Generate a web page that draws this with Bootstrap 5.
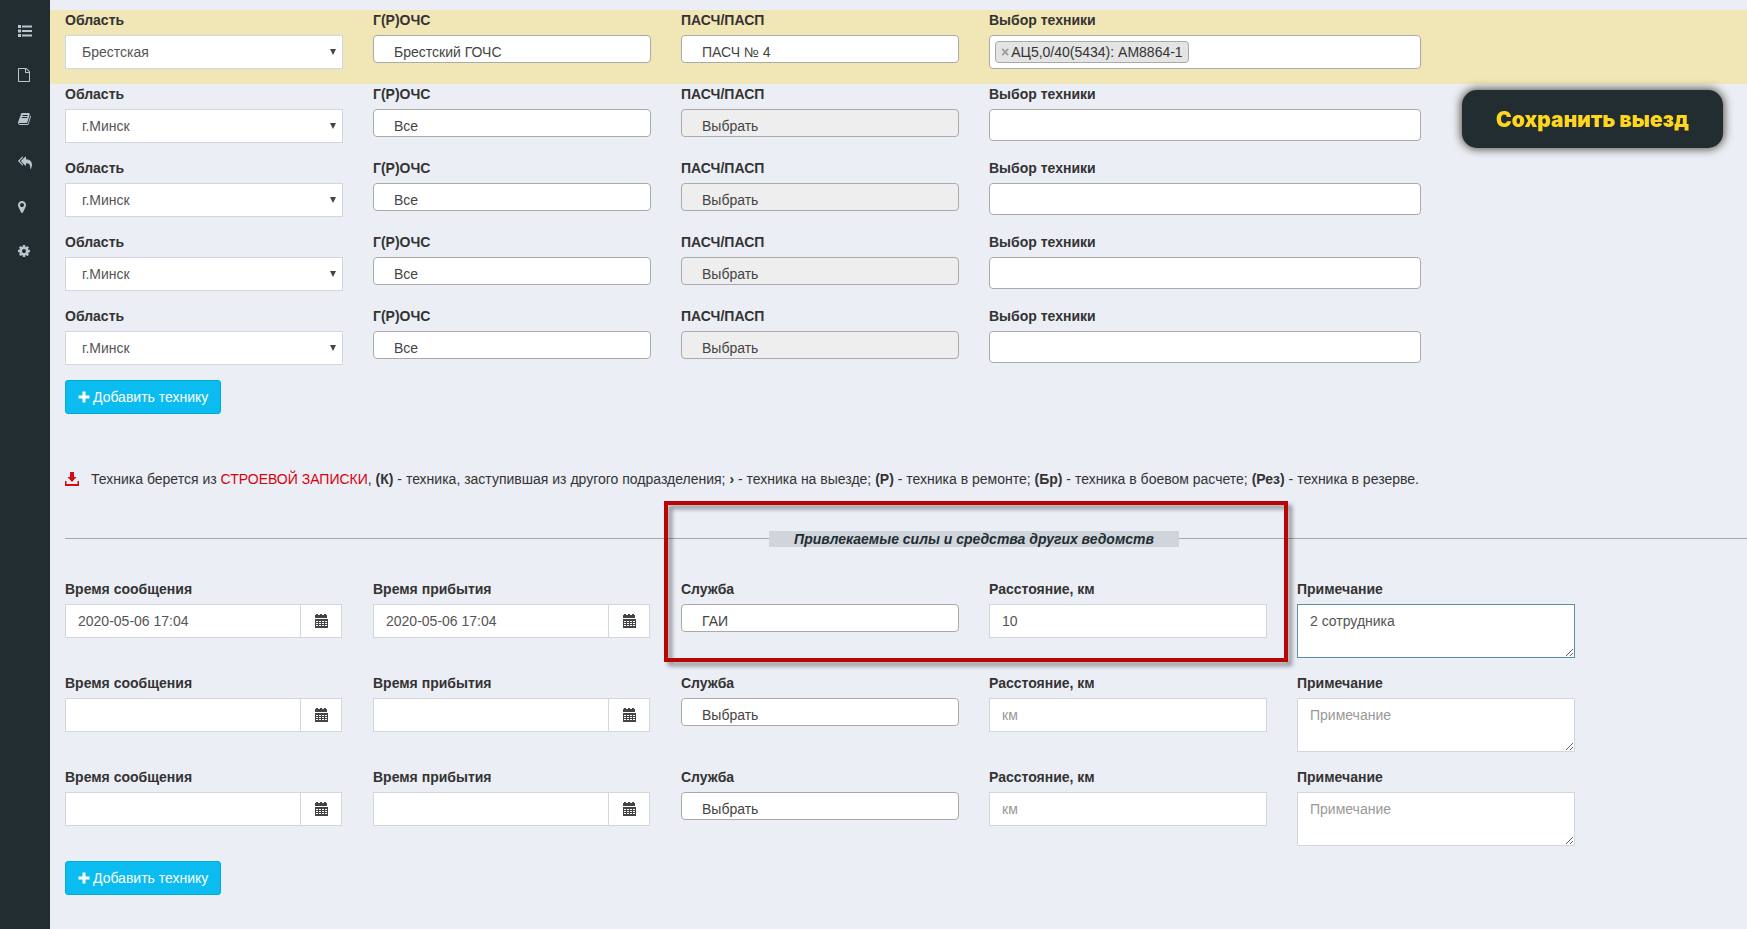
<!DOCTYPE html>
<html lang="ru">
<head>
<meta charset="utf-8">
<meta name="viewport" content="width=device-width, initial-scale=1">
<title>Выезд</title>
<link href="https://cdn.jsdelivr.net/npm/bootstrap@5.3.0/dist/css/bootstrap.min.css" rel="stylesheet">
<style>
  body { font-family: "Liberation Sans", Arial, sans-serif; font-size: 14px; line-height: 20px; color: #333; background: #ebeef5; }
  .side { flex: 0 0 50px; background: #222d32; padding-top: 9px; }
  .side a { height: 44px; padding-left: 18px; color: #b8c7ce; }
  .side svg { width: 14px; height: 14px; fill: currentColor; }
  .page-body { padding-top: 10px; overflow: hidden; min-height: 100vh; }
  .line { display: flex; padding-bottom: 15px; }
  .line.chosen { background: #f1e6b5; }
  .cell { flex: 0 0 18.15%; padding: 0 15px; }
  .cell.wide { flex-basis: 27.23%; }
  .cell > label { display: block; font-weight: 700; margin-bottom: 5px; }
  .form-control, .form-select { font-size: 14px; line-height: 20px; color: #555; border: 1px solid #d2d6de; border-radius: 0; padding: 6px 12px; background-color: #fff; }
  .form-control { min-height: 34px; }
  .form-control::placeholder { color: #999; }
  .form-select { height: 34px; padding-left: 16px; background-size: 8px 8px; background-position: right 5px center;
    background-image: url("data:image/svg+xml,%3Csvg xmlns='http://www.w3.org/2000/svg' viewBox='0 0 8 8'%3E%3Cpath d='M1 1h6L4 7z' fill='%23444'/%3E%3C/svg%3E"); }
  .form-select.combo { height: 28px; padding: 6px 12px 0 20px; border-color: #aaa; border-radius: 4px; color: #444; background-image: none; }
  .form-select.combo:disabled { background-color: #eee; opacity: 1; }
  .picker { width: 100%; height: 32px; border: 1px solid #aaa; border-radius: 4px; background: #fff; padding: 0 5px; }
  .picker.filled { display: flex; align-items: center; height: 34px; }
  .picker input { border: 0; outline: 0; flex: 1; min-width: 0; }
  .chip { display: flex; align-items: center; height: 22px; padding: 0 5px; border: 1px solid #aaa; border-radius: 4px; background: #e4e4e4; white-space: nowrap; }
  .chip button { border: 0; background: none; padding: 0 2px 0 0; color: #999; font-weight: 700; font-size: 14px; line-height: 20px; }
  .input-group { padding-right: 1px; }
  .input-group .btn { width: 42px; padding: 0; border: 1px solid #d2d6de; border-radius: 0; background: #fff; color: #444; }
  .input-group svg { width: 14px; height: 14px; display: block; margin: auto; }
  textarea.form-control { height: 54px; }
  textarea.active-note { border-color: #5a8eab; }
  .btn-add { height: 34px; margin-left: 15px; padding: 0 12px; font-size: 14px; line-height: 20px; color: #fff; background: #0bbcf0; border: 1px solid #00acd6; border-radius: 3px; display: flex; align-items: center; gap: 3px; }
  .btn-add:hover { background: #00acd6; color: #fff; }
  .btn-add svg { width: 12px; height: 12px; }
  .note { margin: 55px 15px 42px; display: flex; gap: 12px; align-items: center; white-space: nowrap; }
  .note svg { width: 14px; height: 14px; }
  .note a { color: #d9000d; text-decoration: none; }
  .divider { display: flex; align-items: center; margin: 0 0 32px 15px; }
  .divider::before, .divider::after { content: ""; flex: 704; height: 1px; margin-bottom: 2px; background: #a3a9b3; }
  .divider::after { flex: 568; }
  .divider h2 { margin: 0; padding: 0 25px; font-size: 14px; line-height: 16px; font-weight: 700; font-style: italic; color: #222d32; background: #d0d5dc; white-space: nowrap; }
  .forces { position: relative; }
  .frame { position: absolute; left: 36.2%; width: 36.75%; top: -30px; height: 161px; border: 4px solid #b90505; filter: drop-shadow(4px 4px 2px rgba(0,0,0,.4)); pointer-events: none; z-index: 2; }
  .btn-save { position: fixed; top: 90px; right: 24px; width: 261px; height: 58px; padding: 2px 0 0; border: 0; border-radius: 15px; background: #222d32; color: #ffd51e; font-family: Inter, sans-serif; font-weight: 900; font-size: 21px; box-shadow: 0 0 10px 1px #4b4b35; }
  .btn-save:hover { background: #1a2226; color: #ffd51e; }
</style>
</head>
<body>
<svg width="0" height="0" class="position-absolute" aria-hidden="true">
  <symbol id="i-cal" viewBox="0 0 14 14"><path fill="currentColor" fill-rule="evenodd" d="M1 1h1V0h2v1h2V0h2v1h2V0h2v1h1v3H1zM1 5h13v9H1zM2 7v1h2V7zm3 0v1h2V7zm3 0v1h2V7zm3 0v1h2V7zM2 9v1h2V9zm3 0v1h2V9zm3 0v1h2V9zm3 0v1h2V9zM2 11v1h2v-1zm3 0v1h2v-1zm3 0v1h2v-1zm3 0v1h2v-1z"/></symbol>
  <symbol id="i-plus" viewBox="0 0 12 12"><path fill="currentColor" d="M4.500 0.500h3v4h4v3h-4v4h-3v-4h-4v-3h4z"/></symbol>
</svg>
<div class="d-flex">
  <nav class="side d-flex flex-column" aria-label="Меню">
    <a href="#" class="d-flex align-items-center" aria-label="Список"><svg viewBox="0 0 14 14"><path d="M0 1h3v3H0zM4 1.500h10v2H4zM0 5.500h3v3H0zM4 6h10v2H4zM0 10h3v3H0zM4 10.500h10v2H4z"/></svg></a>
    <a href="#" class="d-flex align-items-center" aria-label="Документ"><svg viewBox="128 0 1792 1792"><path d="M1596 380q28 28 48 76t20 88v1152q0 40-28 68t-68 28h-1344q-40 0-68-28t-28-68v-1600q0-40 28-68t68-28h896q40 0 88 20t76 48zm-444-244v376h376q-10-29-22-41l-313-313q-12-12-41-22zm384 1528v-1024h-416q-40 0-68-28t-28-68v-416h-768v1536h1280z"/></svg></a>
    <a href="#" class="d-flex align-items-center" aria-label="Журнал"><svg viewBox="64 0 1792 1792"><path d="M1703 478q40 57 18 129l-275 906q-19 64-76.500 107.500t-122.500 43.500h-923q-77 0-148.500-53.500t-99.500-131.500q-24-67-2-127 0-4 3-27t4-37q1-8-3-21.500t-3-19.500q2-11 8-21t16.500-23.500 16.500-23.500q23-38 45-91.500t30-91.500q3-10 .5-30t-.5-28q3-11 17-28t17-23q21-36 42-92t25-90q1-9-2.500-32t.5-28q4-13 22-30.500t22-22.500q19-26 42.500-84.500t27.500-96.500q1-8-3-25.500t-2-26.500q2-8 9-18t18-23 17-21q8-12 16.500-30.500t15-35 16-36 19.500-32 26.500-23.500 36-11.500 47.500 5.500l-1 3q38-9 51-9h761q74 0 114 56t18 130l-274 906q-36 119-71.500 153.500t-128.500 34.500h-869q-27 0-38 15-11 16-1 43 24 70 144 70h923q29 0 56-15.500t35-41.500l300-987q7-22 5-57 38 15 59 43zm-1064 2q-4 13 2 22.500t20 9.500h608q13 0 25.500-9.500t16.500-22.500l21-64q4-13-2-22.500t-20-9.500h-608q-13 0-25.500 9.500t-16.500 22.500zm-83 256q-4 13 2 22.500t20 9.500h608q13 0 25.500-9.500t16.500-22.500l21-64q4-13-2-22.500t-20-9.500h-608q-13 0-25.500 9.500t-16.500 22.500z"/></svg></a>
    <a href="#" class="d-flex align-items-center" aria-label="Назад"><svg viewBox="0 0 1792 1792"><path d="M640 1082v70q0 42-39 59-13 5-25 5-27 0-45-19l-512-512q-19-19-19-45t19-45l512-512q29-31 70-14 39 17 39 59v69l-397 398q-19 19-19 45t19 45zm1152 58q0 58-17 133.500t-38.500 138-48 125-40.500 90.500l-20 40q-8 17-28 17-6 0-9-1-25-8-23-34 43-400-106-565-64-71-170.500-110.500t-267.500-52.500v251q0 42-39 59-13 5-25 5-27 0-45-19l-512-512q-19-19-19-45t19-45l512-512q29-31 70-14 39 17 39 59v262q411 28 599 221 169 173 169 509z"/></svg></a>
    <a href="#" class="d-flex align-items-center" aria-label="Карта"><svg viewBox="384 0 1792 1792"><path d="M1152 640q0-106-75-181t-181-75-181 75-75 181 75 181 181 75 181-75 75-181zm256 0q0 109-33 179l-364 774q-16 33-47.500 52t-67.500 19-67.500-19-46.500-52l-365-774q-33-70-33-179 0-212 150-362t362-150 362 150 150 362z"/></svg></a>
    <a href="#" class="d-flex align-items-center" aria-label="Настройки"><svg viewBox="128 0 1792 1792"><path d="M1152 896q0-106-75-181t-181-75-181 75-75 181 75 181 181 75 181-75 75-181zm512-109v222q0 12-8 23t-20 13l-185 28q-19 54-39 91 35 50 107 138 10 12 10 25t-9 23q-27 37-99 108t-94 71q-12 0-26-9l-138-108q-44 23-91 38-16 136-29 186-7 28-36 28h-222q-14 0-24.500-8.500t-11.500-21.500l-28-184q-49-16-90-37l-141 107q-10 9-25 9-14 0-25-11-126-114-165-168-7-10-7-23 0-12 8-23 15-21 51-66.500t54-70.500q-27-50-41-99l-183-27q-13-2-21-12.500t-8-23.500v-222q0-12 8-23t19-13l186-28q14-46 39-92-40-57-107-138-10-12-10-24 0-10 9-23 26-36 98.500-107.500t94.500-71.500q13 0 26 10l138 107q44-23 91-38 16-136 29-186 7-28 36-28h222q14 0 24.500 8.500t11.500 21.500l28 184q49 16 90 37l142-107q9-9 24-9 13 0 25 10 129 119 165 170 7 8 7 22 0 12-8 23-15 21-51 66.500t-54 70.500q26 50 41 98l183 28q13 2 21 12.500t8 23.500z"/></svg></a>
  </nav>

  <main class="page-body flex-grow-1">
    <div class="line chosen">
      <div class="cell"><label for="r1">Область</label><select id="r1" class="form-select"><option>Брестская</option></select></div>
      <div class="cell"><label for="g1">Г(Р)ОЧС</label><select id="g1" class="form-select combo"><option>Брестский ГОЧС</option></select></div>
      <div class="cell"><label for="p1">ПАСЧ/ПАСП</label><select id="p1" class="form-select combo"><option>ПАСЧ № 4</option></select></div>
      <div class="cell wide"><label for="t1">Выбор техники</label><div class="picker filled"><span class="chip"><button type="button" aria-label="Удалить">×</button>АЦ5,0/40(5434): АМ8864-1</span><input id="t1" type="text"></div></div>
    </div>
    <div class="line">
      <div class="cell"><label for="r2">Область</label><select id="r2" class="form-select"><option>г.Минск</option></select></div>
      <div class="cell"><label for="g2">Г(Р)ОЧС</label><select id="g2" class="form-select combo"><option>Все</option></select></div>
      <div class="cell"><label for="p2">ПАСЧ/ПАСП</label><select id="p2" class="form-select combo" disabled><option>Выбрать</option></select></div>
      <div class="cell wide"><label for="t2">Выбор техники</label><input id="t2" type="text" class="picker"></div>
    </div>
    <div class="line">
      <div class="cell"><label for="r3">Область</label><select id="r3" class="form-select"><option>г.Минск</option></select></div>
      <div class="cell"><label for="g3">Г(Р)ОЧС</label><select id="g3" class="form-select combo"><option>Все</option></select></div>
      <div class="cell"><label for="p3">ПАСЧ/ПАСП</label><select id="p3" class="form-select combo" disabled><option>Выбрать</option></select></div>
      <div class="cell wide"><label for="t3">Выбор техники</label><input id="t3" type="text" class="picker"></div>
    </div>
    <div class="line">
      <div class="cell"><label for="r4">Область</label><select id="r4" class="form-select"><option>г.Минск</option></select></div>
      <div class="cell"><label for="g4">Г(Р)ОЧС</label><select id="g4" class="form-select combo"><option>Все</option></select></div>
      <div class="cell"><label for="p4">ПАСЧ/ПАСП</label><select id="p4" class="form-select combo" disabled><option>Выбрать</option></select></div>
      <div class="cell wide"><label for="t4">Выбор техники</label><input id="t4" type="text" class="picker"></div>
    </div>
    <div class="line">
      <div class="cell"><label for="r5">Область</label><select id="r5" class="form-select"><option>г.Минск</option></select></div>
      <div class="cell"><label for="g5">Г(Р)ОЧС</label><select id="g5" class="form-select combo"><option>Все</option></select></div>
      <div class="cell"><label for="p5">ПАСЧ/ПАСП</label><select id="p5" class="form-select combo" disabled><option>Выбрать</option></select></div>
      <div class="cell wide"><label for="t5">Выбор техники</label><input id="t5" type="text" class="picker"></div>
    </div>
    <button type="button" class="btn btn-add"><svg aria-hidden="true"><use href="#i-plus"/></svg>Добавить технику</button>

    <div class="note">
      <svg viewBox="0 0 14 14" fill="#d01010" aria-hidden="true"><path d="M5 0h4v5h2.500L7 10 2.500 5H5zM0 9h1.500v3h11V9H14v5H0z"/></svg>
      <span>Техника берется из <a href="#">СТРОЕВОЙ ЗАПИСКИ</a>, <b>(К)</b> - техника, заступившая из другого подразделения; <b>›</b> - техника на выезде; <b>(Р)</b> - техника в ремонте; <b>(Бр)</b> - техника в боевом расчете; <b>(Рез)</b> - техника в резерве.</span>
    </div>

    <section class="forces">
      <div class="frame"></div>
      <div class="divider"><h2>Привлекаемые силы и средства других ведомств</h2></div>
      <div class="line">
        <div class="cell"><label for="m1">Время сообщения</label><div class="input-group"><input id="m1" type="text" class="form-control" value="2020-05-06 17:04"><button type="button" class="btn" aria-label="Календарь"><svg><use href="#i-cal"/></svg></button></div></div>
        <div class="cell"><label for="a1">Время прибытия</label><div class="input-group"><input id="a1" type="text" class="form-control" value="2020-05-06 17:04"><button type="button" class="btn" aria-label="Календарь"><svg><use href="#i-cal"/></svg></button></div></div>
        <div class="cell"><label for="s1">Служба</label><select id="s1" class="form-select combo"><option>ГАИ</option></select></div>
        <div class="cell"><label for="d1">Расстояние, км</label><input id="d1" type="text" class="form-control" value="10"></div>
        <div class="cell"><label for="n1">Примечание</label><textarea id="n1" class="form-control active-note" placeholder="Примечание">2 сотрудника</textarea></div>
      </div>
      <div class="line">
        <div class="cell"><label for="m2">Время сообщения</label><div class="input-group"><input id="m2" type="text" class="form-control"><button type="button" class="btn" aria-label="Календарь"><svg><use href="#i-cal"/></svg></button></div></div>
        <div class="cell"><label for="a2">Время прибытия</label><div class="input-group"><input id="a2" type="text" class="form-control"><button type="button" class="btn" aria-label="Календарь"><svg><use href="#i-cal"/></svg></button></div></div>
        <div class="cell"><label for="s2">Служба</label><select id="s2" class="form-select combo"><option>Выбрать</option></select></div>
        <div class="cell"><label for="d2">Расстояние, км</label><input id="d2" type="text" class="form-control" placeholder="км"></div>
        <div class="cell"><label for="n2">Примечание</label><textarea id="n2" class="form-control" placeholder="Примечание"></textarea></div>
      </div>
      <div class="line">
        <div class="cell"><label for="m3">Время сообщения</label><div class="input-group"><input id="m3" type="text" class="form-control"><button type="button" class="btn" aria-label="Календарь"><svg><use href="#i-cal"/></svg></button></div></div>
        <div class="cell"><label for="a3">Время прибытия</label><div class="input-group"><input id="a3" type="text" class="form-control"><button type="button" class="btn" aria-label="Календарь"><svg><use href="#i-cal"/></svg></button></div></div>
        <div class="cell"><label for="s3">Служба</label><select id="s3" class="form-select combo"><option>Выбрать</option></select></div>
        <div class="cell"><label for="d3">Расстояние, км</label><input id="d3" type="text" class="form-control" placeholder="км"></div>
        <div class="cell"><label for="n3">Примечание</label><textarea id="n3" class="form-control" placeholder="Примечание"></textarea></div>
      </div>
      <button type="button" class="btn btn-add"><svg aria-hidden="true"><use href="#i-plus"/></svg>Добавить технику</button>
    </section>
  </main>
</div>
<button type="button" class="btn btn-save">Сохранить выезд</button>
<script src="https://cdn.jsdelivr.net/npm/bootstrap@5.3.0/dist/js/bootstrap.bundle.min.js"></script>
</body>
</html>
